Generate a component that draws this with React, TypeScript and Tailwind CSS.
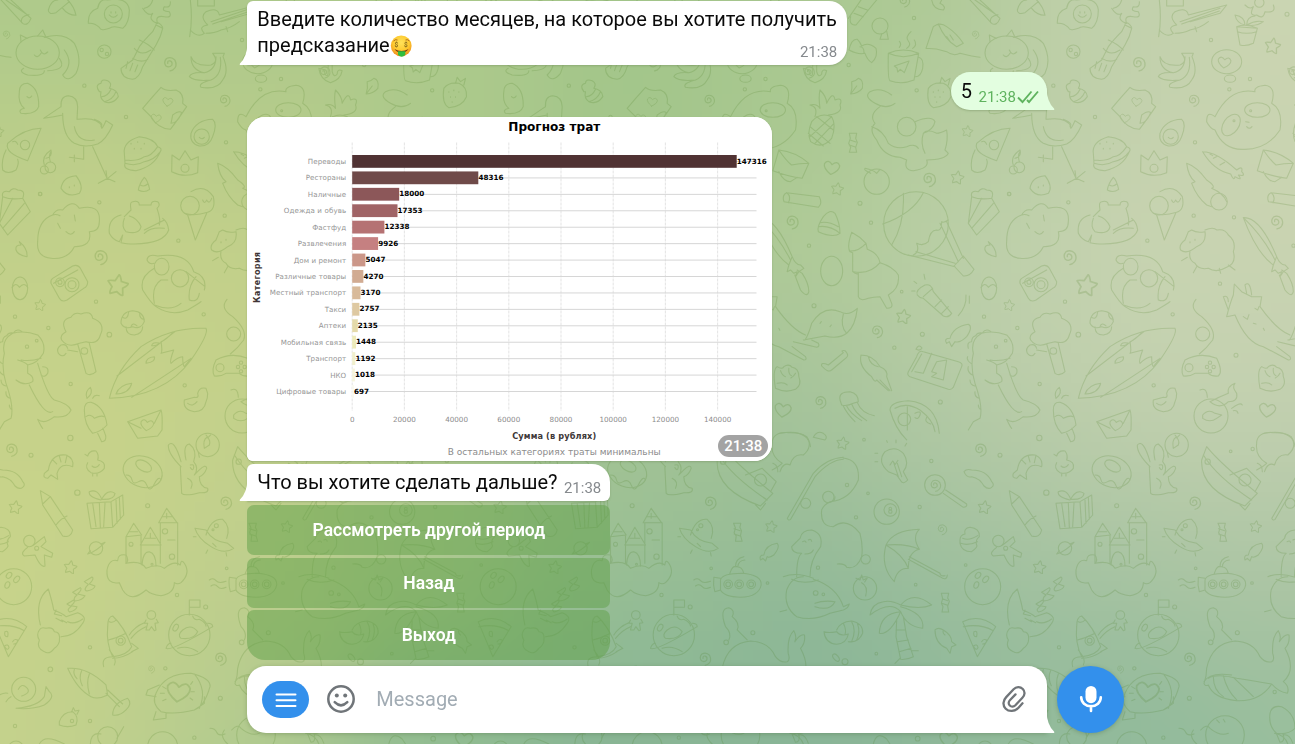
import React, { useLayoutEffect, useRef } from "react";

type Pt3 = [number, number, number];

const SAMPLES: [number, number, Pt3][] = [
  [0, 0, [174, 202, 139]],
  [0, 180, [189, 206, 138]],
  [0, 372, [198, 210, 138]],
  [0, 600, [200, 211, 138]],
  [0, 744, [197, 210, 140]],
  [120, 280, [196, 209, 138]],
  [120, 440, [199, 211, 138]],
  [120, 600, [199, 211, 139]],
  [120, 720, [192, 208, 141]],
  [240, 0, [170, 200, 140]],
  [240, 110, [184, 204, 138]],
  [240, 300, [195, 208, 138]],
  [240, 500, [194, 208, 140]],
  [240, 620, [188, 205, 142]],
  [240, 744, [172, 201, 144]],
  [450, 90, [172, 201, 139]],
  [430, 530, [174, 201, 143]],
  [430, 744, [143, 187, 145]],
  [640, 480, [164, 196, 148]],
  [640, 560, [154, 191, 148]],
  [650, 640, [143, 186, 149]],
  [650, 744, [132, 178, 148]],
  [650, 90, [162, 197, 138]],
  [800, 90, [169, 200, 144]],
  [870, 0, [170, 200, 145]],
  [800, 250, [175, 202, 150]],
  [790, 400, [166, 196, 154]],
  [800, 530, [153, 189, 153]],
  [800, 640, [138, 181, 150]],
  [860, 744, [135, 180, 151]],
  [950, 100, [184, 205, 162]],
  [950, 250, [187, 207, 168]],
  [950, 400, [182, 203, 166]],
  [950, 520, [166, 195, 160]],
  [950, 640, [148, 187, 155]],
  [1100, 60, [192, 208, 171]],
  [1080, 300, [196, 210, 175]],
  [1190, 200, [200, 211, 176]],
  [1190, 330, [200, 212, 178]],
  [1100, 430, [190, 206, 172]],
  [1100, 540, [172, 198, 164]],
  [1080, 650, [157, 191, 158]],
  [1100, 744, [139, 183, 153]],
  [1295, 30, [203, 213, 178]],
  [1295, 220, [202, 212, 178]],
  [1295, 400, [195, 208, 176]],
  [1295, 540, [180, 201, 168]],
  [1295, 640, [165, 194, 161]],
  [1295, 744, [147, 189, 155]],
];

function paintGradient(canvas: HTMLCanvasElement) {
  const ctx = canvas.getContext("2d");
  if (!ctx) return;
  const { width: w, height: h } = canvas;
  const image = ctx.createImageData(w, h);
  for (let y = 0; y < h; y++) {
    for (let x = 0; x < w; x++) {
      const px = ((x + 0.5) / w) * 1295;
      const py = ((y + 0.5) / h) * 744;
      let sum = 0;
      const c = [0, 0, 0];
      for (const [sx, sy, rgb] of SAMPLES) {
        const d = Math.exp(-((px - sx) ** 2 + (py - sy) ** 2) / (2 * 80 * 80));
        sum += d;
        rgb.forEach((v, i) => (c[i] += v * d));
      }
      const o = (y * w + x) * 4;
      image.data[o] = c[0] / sum;
      image.data[o + 1] = c[1] / sum;
      image.data[o + 2] = c[2] / sum;
      image.data[o + 3] = 255;
    }
  }
  ctx.putImageData(image, 0, 0);
}

const Stars = ({ at }: { at: Pt3[] }) => (
  <>
    {at.map(([x, y, r]) => (
      <path key={`${x}-${y}`} transform={`translate(${x} ${y}) scale(${r / 20}) rotate(8)`} d="M0-20Q3-19 6-8L19-6Q20-3 10 4L12 17Q9 19 0 12L-12 17Q-14 14-10 4L-19-6Q-18-8-6-8Z" />
    ))}
  </>
);
const Spirals = ({ at }: { at: Pt3[] }) => (
  <>
    {at.map(([x, y, r]) => (
      <path key={`${x}-${y}`} transform={`translate(${x} ${y}) scale(${r / 20})`} d="M-4 0Q-5-8 2-6Q9-3 6 5Q-1 12-9 6Q-15-3-7-12Q5-18 14-8Q22 8 8 17L2 19" />
    ))}
  </>
);
const Hearts = ({ at }: { at: Pt3[] }) => (
  <>
    {at.map(([x, y, r]) => (
      <path key={`${x}-${y}`} transform={`translate(${x} ${y}) scale(${r / 20}) rotate(8)`} d="M0 18Q-22 4-20-8Q-12-22 0-8Q12-22 20-8Q22 4 0 18Z" />
    ))}
  </>
);
const Rings = ({ at }: { at: Pt3[] }) => (
  <>
    {at.map(([x, y, r]) => (
      <circle key={`${x}-${y}-${r}`} cx={x} cy={y} r={r} />
    ))}
  </>
);

const TOP_PATHS = [
  "M205 55L250-10M228 75L290 0M212 50Q205 75 228 75M222 40L250 50M235 20L262 30",
  "M305 102l-5 16h25l-5-25",
  "M325 160Q323 240 330 242Q365 255 402 240L416 160Q370 140 325 160ZM325 160Q370 180 416 160M416 172Q432 175 428 205Q422 232 404 230M358 142q8-10 0-18M380 145q15-10 5-22t8-28M398 145q15-10 5-25M343 198l44-15-14 35-12-10-8 8-2-12z",
  "M207 150Q215 115 232 118Q240 125 245 138Q265 125 288 145Q295 170 275 188Q262 180 255 160Q235 165 207 150M240 140q12 0 12 18",
  "M438 145L460 80Q480 65 500 80Q530 100 550 130L530 140Q495 120 475 72M438 145Q470 145 500 155Q520 170 540 160Q580 170 600 172M500 110l10 15M510 105l10 15",
  "M570 0L635 70Q650 80 660 55L600 0M585 0L650 45M632 68q-5-20 22-24",
  "M712 30Q720 0 740 0M712 30Q712 45 735 38L775 5M755 25Q770 45 795 46Q790 20 770 0",
  "M832 70Q830 35 860 25Q865-5 890 0Q950-10 955 30Q955 70 935 85Q905 75 895 85Q870 95 865 82Q850 68 832 70ZM895 45q12 14 24 0M900 35v4M914 35v4",
  "M630 125L628 105L648 115M680 108L695 90L705 112M700 112Q760 95 790 130Q815 180 795 220Q770 250 755 225Q790 190 760 150M745 175Q770 210 710 212M670 165q10 12 20-5M688 150q8 20 22 6M638 205Q620 215 650 225Q700 230 700 212",
  "M1035 75L1025 95Q1000 120 985 140Q970 170 965 180L930 205Q930 235 965 238Q985 235 995 200L1035 135Q1050 110 1055 85ZM985 120Q1010 130 1030 150M965 175Q990 190 1010 178M970 145q20 25 50 5M1035 72q8-10 20 10M950 185l-5 20M965 190l-8 22M980 195l-8 20",
  "M995 25Q1010 50 1025 40Q1010 60 1040 70Q1030 45 1060 50Q1085 55 1075 35Q1050 35 1060 20Q1080 25 1078 5M1000 25Q1020 20 1025 0",
  "M1138 0Q1145 60 1136 110M1138 90Q1160 115 1180 100Q1160 80 1190 75Q1165 50 1185 35Q1220 20 1225 45L1340 15L1320 40L1230 65M1200 65L1320 25M1205 72L1318 33M1185 100Q1210 100 1230 90Q1260 85 1285 65M1160 0v18h50v-18M1245 80l5 15",
  "M1140 170Q1150 200 1200 195Q1225 185 1205 160L1240 160L1236 170Q1255 215 1235 240Q1220 270 1170 262Q1160 250 1200 240Q1150 245 1135 230Q1140 215 1180 218Q1140 210 1140 170M1180 218Q1215 210 1215 170M1200 240Q1235 225 1228 172",
  "M1370 80L1380 135Q1400 140 1420 130L1432 85ZM1370 80Q1400 70 1432 85M1372 95Q1400 105 1430 95M1400 75Q1400 50 1425 48M1365 45Q1395 50 1395 75M1365 45Q1370 70 1395 75M1400 75Q1430 80 1450 65Q1425 60 1400 75M1395 15Q1410 30 1420 20Q1405 50 1430 45Q1450 60 1455 35Q1490 40 1480 15",
  "M1305 350Q1280 330 1280 365Q1290 385 1305 390Q1330 450 1390 448Q1460 450 1500 390Q1510 330 1475 310Q1490 260 1455 256Q1420 260 1425 275Q1350 260 1305 350M1397 365l10 2M1400 380q8 10 16 0",
  "M865 275Q850 255 870 250Q870 235 890 242Q905 250 895 265Q920 270 922 290Q905 315 880 305Q865 295 870 275ZM880 305Q905 300 915 275M872 290Q890 290 900 268",
  "M1050 262Q1065 275 1095 270Q1120 280 1115 310L1127 320Q1100 360 1078 388Q1040 385 1020 350L995 325Q1020 295 1050 262ZM1085 345Q1105 330 1112 338Q1100 370 1080 370Z",
  "M1205 358Q1220 370 1205 410Q1195 440 1165 438Q1135 430 1140 400Q1155 360 1205 358ZM1165 412q8 8 15 0",
  "M750 320Q748 288 772 287Q800 290 800 320L798 358M750 320L698 355Q730 350 755 345M755 340Q755 410 790 430Q820 445 860 432Q885 420 905 375L885 362Q870 395 872 380Q860 350 800 358M790 380Q800 430 850 420M850 358Q880 370 870 380M818 440V478L775 472M790 465l0 20M845 440L888 535M862 550L890 535L915 515M888 535L885 512M888 535L912 545",
  "M940 460Q935 425 985 410Q1030 415 1040 440Q1055 445 1048 455Q1030 500 975 512Q935 510 942 490ZM942 480Q980 485 1000 470Q1020 470 1040 440M942 490Q975 500 1000 485Q1030 480 1048 455M960 430v2M980 425v2M1000 430v2M970 445v2M990 445v2",
  "M1083 465L1082 515Q1120 535 1160 518L1162 470L1140 480L1122 452L1105 480Z",
  "M1268 455Q1310 455 1370 510M1268 455Q1300 510 1352 522M1370 510Q1390 495 1385 515Q1400 530 1375 525Q1390 545 1365 530Q1362 545 1352 522M1300 475l12-6M1320 495l14-8M1290 462l8 5",
  "M1450 450Q1500 455 1540 490L1520 535Q1480 530 1432 512ZM1450 450Q1470 480 1488 495Q1510 490 1540 490M1450 515Q1465 545 1485 545L1505 532",
  "M625 275Q625 250 650 250Q685 265 683 320Q675 345 630 340Q620 330 640 325Q620 310 625 275M648 290q8 8 14-2",
  "M95 365Q120 335 155 350Q170 375 155 415Q125 450 92 425Q80 400 95 365ZM90 380L150 430M85 400L130 438M110 350L160 390M155 350L90 410M162 370L105 430M105 350Q115 320 90 315Q110 310 120 325Q115 290 120 270Q140 290 140 310Q160 270 165 300Q190 290 180 315Q190 340 145 345",
  "M212 282Q235 280 247 265Q252 240 235 235Q225 245 215 245Q218 265 212 282L230 258",
  "M208 400h22l-3 15l5 12l-5 15l3 15h-22l4-15l-6-12l5-15zM210 420l18 6M208 435l18 6",
  "M345 310Q320 330 285 310Q250 290 270 275Q300 260 335 285M300 320Q265 345 285 370Q265 390 290 420Q310 470 360 472L380 480Q370 510 400 512Q450 505 440 480Q495 480 505 460L495 450Q505 420 500 390Q480 400 470 400Q440 385 430 400Q420 430 435 460M405 365Q455 345 465 365Q460 390 430 400M275 380Q310 390 325 430Q350 450 380 440Q405 430 415 445",
  "M690 385Q640 385 590 430Q580 460 650 482ZM585 450Q570 480 575 510Q590 525 615 510Q625 490 620 478M605 425q10-5 15 8",
  "M700 495Q690 470 720 450Q725 470 705 475M718 485Q712 465 720 455",
  "M272 520Q250 510 255 505Q280 510 290 520L300 508",
  "M750 565Q755 530 795 527Q820 560 805 580Q770 595 750 565M775 560v3M790 555v3",
  "M445 265Q460 245 490 250Q515 260 513 290Q500 320 460 323Q438 310 445 265M480 250L485 232L495 245L510 235L505 255M460 275v2M475 270v2M490 275v2M465 290v2M480 290v2M470 305v2",
  "M1000 532Q985 550 982 570Q1000 580 1016 568Q1010 540 1000 532ZM988 555Q1000 562 1010 552",
  "M1220 490Q1250 500 1280 540Q1310 560 1295 565Q1330 580 1340 605M1220 490Q1225 530 1245 545L1235 550Q1250 590 1280 615L1295 620",
  "M70 205Q75 240 105 248Q135 240 140 212Q125 205 125 222Q115 235 110 215V190M70 205Q90 205 88 222Q98 235 98 215V190",
  "M455 0Q460 30 490 30Q500 20 480 10L485 0",
];

const MID_PATHS = [
  "M20 38Q5 45 12 65L115 82Q128 70 118 50ZM20 38Q35 50 25 68",
  "M130 110Q150 85 165 100Q180 130 180 160Q160 175 115 155Q110 140 130 110ZM115 140Q150 135 180 160M120 128q25-5 55 12",
  "M370 40Q375 130 335 195M430 38Q400 100 308 132M500 125L550 235M480 130L535 245M385 225L525 260M408 215L525 250M550 228L582 268Q570 290 550 288L522 258ZM505 120Q490 130 485 125Q485 155 470 150Q450 150 445 185Q430 200 410 190Q420 215 400 225",
  "M215 157Q200 200 210 215L218 218V275Q230 285 235 280V350Q240 365 265 355Q280 350 300 350L320 385Q340 385 335 370L325 345Q360 325 355 285Q340 260 300 248Q295 220 262 208L258 190Q240 170 215 157ZM208 213Q235 215 258 190M220 275Q270 285 300 248",
  "M1390 113Q1440 110 1490 230L1480 255Q1430 220 1390 113ZM1390 113Q1450 170 1485 240M1480 255L1475 275L1485 270L1495 280L1505 275L1500 290L1510 275L1525 265L1515 255Q1500 255 1490 230M1498 285L1515 330Q1535 355 1540 335Q1540 310 1520 280L1505 270",
  "M575 50Q570 30 595 35Q605 20 620 30Q645 30 635 55L658 95L590 165L565 130ZM565 130L605 55M575 145L640 70M575 50Q600 60 635 55",
  "M680 185Q680 120 725 105Q735 85 755 90Q785 55 805 85Q870 70 865 125Q865 155 835 155Q845 200 790 200Q770 240 720 235Q675 230 680 185ZM765 155q15 15 25 0M740 130l8 15M790 105l3 18M725 105q10-4 22 2",
  "M625 185Q650 205 648 230Q620 225 615 210Q612 195 630 195Z",
  "M960 90Q955 65 965 65Q985 60 985 75L1020 75Q1020 60 1040 65Q1050 75 1038 85Q1050 120 1045 135M960 90L940 110M930 105Q890 115 895 160Q905 180 925 185L935 165L930 188Q945 192 970 192Q1060 190 1073 150Q1070 125 1055 115M940 115Q930 140 945 155Q985 165 990 140Q980 115 955 108M1000 160Q1020 140 1060 145M1000 150L1060 120",
  "M1140 35Q1180 10 1207 50Q1215 90 1190 97Q1150 110 1120 100M1130 105L1153 180L1187 100M1175 60q5 15 12 0q8 15 15-5",
  "M1225 155L1235 150Q1250 160 1275 155Q1280 190 1250 200Q1220 225 1202 210Q1195 195 1215 180ZM1275 150Q1300 140 1310 150Q1335 145 1345 165Q1370 185 1360 215Q1370 250 1340 262Q1310 280 1285 265Q1255 270 1245 250Q1225 240 1230 215M1222 232L1205 242M1250 260L1240 278M1318 265L1322 280M1345 255L1365 270M1230 185v3M1245 178v3",
  "M725 295L785 258Q800 252 808 265L830 305Q830 320 818 325L768 360Q752 368 745 355L720 310Q718 300 725 295ZM728 310L800 270",
  "M603 322Q615 305 625 322Q640 305 650 322",
  "M1040 228Q1010 220 1008 240Q1015 255 1030 250M1040 228Q1130 215 1148 275Q1190 290 1180 330M1030 265Q985 290 995 330Q1020 370 1035 380Q1080 410 1130 390Q1165 370 1170 365M1030 370Q1020 320 1050 300L1070 300M1155 290Q1130 320 1135 360Q1160 370 1165 340M1125 275L1182 320M1030 375Q1080 395 1110 370",
  "M412 345Q405 330 435 315Q455 310 460 335L515 400Q505 415 490 408L430 355Q420 355 412 345ZM430 350L458 325M465 380L485 360M485 400L505 380M435 298l-3-15M410 310l-8-6M405 333h-10",
  "M535 407Q560 380 558 345M568 348v22",
  "M500 490Q490 475 510 475Q520 440 565 433Q580 440 560 470Q540 490 525 485L515 500L508 485Z",
  "M1340 410Q1350 370 1360 345L1363 312L1385 335L1415 350L1445 350L1440 380Q1490 450 1530 465M1340 410L1365 405Q1400 490 1450 500L1525 540Q1535 540 1530 530L1490 500M1330 350L1345 390M1330 350Q1345 345 1345 365M1395 315L1400 340M1395 315Q1410 300 1415 345M1390 410l12 8l5-14M1425 385l8 5l4-10M1420 430l8 2M1450 445l3 6",
  "M70 480L135 468Q220 490 232 385Q205 410 180 395Q130 375 95 430Q85 465 75 480M40 485L110 502Q120 500 115 490L95 480M190 402Q180 440 200 460M120 430l4-5M150 440l4-5",
  "M145 555L190 518Q180 510 195 512Q208 525 200 532L155 570Q145 580 125 558Q122 545 145 555",
  "M243 525Q280 525 300 560Q325 570 320 590L335 632M243 525Q235 560 275 590Q285 610 290 600L325 632M300 600L330 632M265 530Q270 555 295 560",
  "M430 515L535 545Q550 550 545 560L520 622Q515 630 505 628L390 590Q380 585 385 575L410 530Q415 510 430 515ZM455 520L430 580L405 575M425 522L395 575M470 545L500 540L490 600L455 590L470 580L455 575ZM408 508q8-18 18-4q-5 10-18 4",
  "M605 460Q640 450 680 465Q705 490 697 520Q680 550 650 555Q640 545 620 540M605 460Q570 480 580 520Q570 560 585 610Q610 680 600 715L580 725L565 750M650 555V580Q670 590 665 605Q640 620 615 600M680 550Q710 650 730 660Q770 670 780 690Q770 715 730 710Q700 735 680 718Q690 740 695 745M725 695Q700 710 655 615M695 560Q715 560 710 580Q700 595 690 585M630 540Q660 545 690 535M565 505q-5-20 10-20q0-15 12-18q5-10 20-8q10-15 25-5M563 530q-5 10 10 20M565 560q-5 15 12 25M570 600q0 15 15 18M585 635q-2 15 12 20M595 675q0 10 8 14",
  "M805 490Q770 505 752 480Q745 465 765 455Q745 420 780 412Q790 395 810 402Q840 390 845 415Q885 430 868 465Q860 495 825 485ZM800 492L825 580Q840 590 855 575L835 490M800 515L770 510M770 505Q765 490 750 495Q735 505 742 520Q755 535 765 520",
  "M930 430Q930 395 965 392Q1000 395 1000 425Q990 450 965 440Q940 450 930 430ZM945 440Q945 465 970 465Q995 460 995 440M935 412q15 10 18-16M1000 418q-15 0-14-20M960 440q5-15 18-2",
  "M895 655Q915 570 990 500Q1080 440 1185 445Q1195 460 1140 540Q1060 650 895 655ZM918 588L1092 455M962 652L1140 535M1085 458Q1065 480 1050 485Q1055 515 1050 520L1088 510Q1075 545 1080 550Q1100 530 1115 530Q1115 555 1120 560L1140 535",
  "M915 642Q925 615 962 610Q955 640 915 642ZM1005 550q0-18 25-20q5 15-25 20M1022 497q2-12 22-8q-5 10-22 8",
  "M1248 358Q1225 385 1265 410Q1310 450 1298 480Q1280 505 1258 522M1215 540Q1260 515 1310 535Q1330 575 1315 588Q1295 590 1285 580H1245Q1230 590 1210 588Q1200 570 1215 540Z",
  "M1440 625Q1430 570 1445 560Q1460 570 1465 560Q1480 550 1490 562Q1510 565 1510 590Q1520 615 1500 628Q1470 640 1440 625ZM1455 572q5 15 15 18M1480 565q-2 18 8 22M1500 580q-5 10-14 14M1445 610q20-5 30 5",
  "M180 660Q175 635 210 635Q235 640 235 665L220 670Q200 680 185 675ZM190 678Q200 700 225 725M200 678Q210 700 245 722M215 672Q225 700 260 722M232 668Q245 700 283 707",
  "M330 690Q330 665 385 662Q470 670 478 760M330 690Q345 745 380 780M345 685Q380 665 420 690Q460 720 465 755M382 680V750M405 700q20-10 15 5t-15 8M440 712q-8 15 12 20",
  "M820 690Q820 665 840 667Q880 680 888 735Q870 755 845 760Q820 735 820 690ZM828 655Q820 635 838 622Q848 640 828 655M845 655q5-12 20-8M825 710Q840 700 850 715Q870 705 880 710M860 760l12 25q15 0 12-18l-8-22",
  "M950 725L1050 690Q1055 700 1053 750L1040 768L980 775ZM950 725L990 745M1050 690L1030 730",
  "M1160 640Q1165 620 1185 625L1190 640Q1190 655 1185 665Q1180 695 1150 695Q1115 690 1120 660L1150 652Q1165 655 1160 640M1130 670q15 12 28-5",
  "M1290 665Q1320 690 1345 665Q1375 665 1370 640Q1355 620 1365 610Q1340 620 1345 640Q1320 650 1290 665M1260 630q20-10 22 22M1355 685q25-20 32-10M1360 692q12-2 14 8M1268 705Q1285 685 1305 700L1325 705L1310 715Q1290 730 1268 715Z",
];

const LOW_PATHS = [
  "M0 125Q10 95 30 105Q40 70 70 75Q100 50 80 20Q50 0 0 10M100 22Q110 0 130 10Q145 20 135 30Z",
  "M325 125Q290 95 315 65Q345 45 370 70Q390 100 370 125L383 150Q370 165 362 152L350 135ZM340 95L355 140M352 100L365 140M330 105l8-12l8 10l8-12M320 32l2 5M348 30v8M380 40l-5 8M285 70h8M285 95h8",
  "M22 265L100 130Q140 85 190 82M32 268L105 140Q150 90 190 88M22 265q3 8 10 3M190 84Q240 90 235 150Q210 210 150 215M125 240Q120 290 160 290Q200 260 240 310Q250 350 245 380Q230 420 200 412Q195 400 172 402M165 200Q165 215 150 215Q130 225 125 240",
  "M490 190L550 232Q562 232 560 222L497 180",
  "M552 125Q560 115 575 120Q620 120 635 155Q645 165 635 172Q625 180 612 168Q600 145 575 140Q560 145 552 125",
  "M700 130Q695 145 710 145L720 135L740 148L738 130Q750 95 785 110Q790 85 765 75Q720 70 712 120ZM725 90l12 12M745 78l5 18M768 76l-5 22",
  "M830 78Q835 60 855 63Q865 75 860 90Q885 95 880 115Q865 135 840 128Q820 115 830 98M830 78l-8-5M843 108q12 10 22-4M845 130v8M858 130v8",
  "M688 182L718 200L785 300Q780 325 755 318L695 225ZM695 222L718 200M735 285Q750 265 768 258",
  "M828 220L900 215L935 195L938 255L905 292L840 296ZM845 220L855 290M865 218L868 292M882 218L878 290M900 215L905 292M915 210L918 280M925 202L928 268M870 210Q830 200 835 185Q860 175 872 208Q890 175 912 190Q910 210 872 208",
  "M1110 110Q1070 70 1072 45Q1090 25 1110 95M1125 90Q1115 45 1135 42Q1160 60 1148 95Q1165 115 1150 135L1165 120Q1185 100 1187 115Q1180 135 1165 140Q1165 170 1190 175Q1195 190 1165 188Q1120 200 1112 190Q1110 150 1108 110M1130 145Q1150 155 1140 175M1138 105q12-4 10 8t-10 0M1165 82l-3-15M1180 55Q1175 30 1188 22Q1200 30 1195 45ZM1185 15l6 8l8-8",
  "M1280 50Q1320 100 1432 190L1395 228Q1260 180 1265 90ZM1270 75Q1310 140 1415 210M1350 135L1400 115L1442 155L1425 185M1380 225l15 15l15-20M1430 120Q1450 110 1460 100Q1425 80 1430 40Q1430 5 1480 8Q1540 5 1545 50M1432 100q15 5 15 25",
  "M945 400V320M990 400V315M945 320L968 280L992 315ZM988 345L1018 292L1050 345ZM1048 400V280M1100 405V278M1043 278L1067 235L1098 278ZM993 405Q995 365 1015 365Q1035 370 1035 408M955 305h25M1003 325h30M1055 260h30M1018 310v15M1067 250v15M1070 330h22",
  "M925 458Q885 465 888 420Q895 385 920 392Q920 370 945 375Q955 390 945 400Q990 390 1005 415Q1040 400 1060 415Q1090 390 1108 405Q1110 385 1120 400Q1140 430 1110 458Q1100 465 1090 458Q1090 490 1050 497Q1020 495 1005 480Q960 520 935 480Z",
  "M1185 315Q1200 265 1235 268Q1260 290 1247 325M1152 295L1185 300Q1205 335 1250 340L1268 355Q1240 375 1200 350Q1160 325 1152 295ZM1190 360l-5 10M1245 368l2 10M1155 320h-8M1205 340l10 10",
  "M484 490h22l-3 14l5 10l-5 14l3 18h-20l3-16l-5-10l4-14zM487 506l16 6M485 520l18 6",
  "M1314 280h22l-3 12l5 10l-3 14l5 18h-20l2-16l-6-10l4-14zM1316 296l18 6M1316 312l18 6",
  "M1395 390Q1390 375 1405 375Q1410 345 1445 340Q1455 350 1435 375Q1420 385 1415 380L1410 393L1402 385Z",
  "M465 600Q475 590 490 600Q515 615 515 635L528 645L515 650L510 670L500 655Q465 640 465 600ZM490 600q-3 10 5 15",
  "M1275 450Q1280 430 1340 430Q1400 435 1397 465Q1390 500 1335 502Q1285 500 1275 480ZM1275 445L1255 442Q1252 465 1258 485L1275 480M1303 430Q1310 405 1325 410Q1340 410 1345 430M1320 410Q1320 385 1345 380M1327 410Q1328 392 1348 390M1195 450q12-8 20 2t30 2M1200 468q12-8 20 2t25 2",
  "M70 440Q35 440 20 480Q10 530 50 560Q100 575 150 550L190 540Q205 535 208 522L190 530Q170 470 100 448M50 440Q50 380 65 370Q35 370 35 350Q50 335 60 325Q65 300 95 300Q130 310 122 350Q90 390 90 440M10 440Q50 425 100 445M105 520Q130 510 165 515Q150 545 105 530M35 448Q70 465 115 450M0 545L20 540M68 335q8-5 10 2M85 330q8-5 10 4M75 372q20 0 25-12",
  "M228 445l12 5l5-15l5 15l12-6l-8 12M245 458q20 10 12 40",
  "M318 345Q340 300 418 298Q395 320 418 358Q385 365 385 415Q350 415 343 455Q300 410 318 345ZM318 345Q380 340 418 358M318 345Q370 375 385 415M388 380L480 430Q480 440 495 437M385 388L480 440Q500 455 502 435",
  "M540 330Q540 315 555 312Q550 295 570 292Q600 295 598 320Q585 330 590 345Q595 350 575 365Q545 365 540 340ZM542 340Q565 348 592 335M548 325q20 8 45-8",
  "M668 345L700 320L705 335L690 350L725 370L722 382L700 375L702 408Q690 415 672 375L640 378Q625 370 650 352",
  "M830 372Q855 365 882 337L870 342M838 362L830 372",
  "M712 477Q670 510 688 585M712 477Q725 520 728 540Q755 550 765 560L800 548Q830 560 815 580Q790 620 750 620M735 540l-5 12l22 5M735 565L755 575M770 575q20 10 45-8M752 570l15 8",
  "M685 600Q690 590 705 595Q725 590 730 605Q750 605 745 635Q740 650 730 655Q715 675 700 665Q675 655 685 630Q675 615 685 600Z",
  "M820 455L843 441Q852 445 835 462L852 468Q850 478 828 483Q815 480 832 463ZM785 487L808 473Q815 478 800 492L822 497Q815 510 792 513Q785 505 798 495ZM768 522L788 510Q795 515 780 527L798 530Q795 542 776 546Q765 540 780 530Z",
  "M362 545Q330 510 270 555Q275 520 310 515Q335 510 362 525Q400 480 455 525Q420 540 362 525M362 545Q300 550 298 610Q330 615 362 545M362 545Q380 590 428 595Q435 550 362 530M350 570L348 620L362 688Q380 690 400 680L380 620L370 560M348 600L375 600M352 635L385 630M358 665L393 655M345 700L360 685M395 662H415",
  "M132 605Q135 640 170 643Q200 640 205 612Q180 620 170 605Q145 610 132 605M170 600Q180 575 215 573Q250 580 248 610Q235 640 205 635M190 580Q200 600 195 615M215 575Q230 600 215 635M232 580q10 25-2 50",
  "M548 575Q600 550 647 590L592 680ZM550 590Q600 580 640 602M582 605q12-5 8 15q-12 0-8-15M605 635q5-10 15-5q0 12-12 12M580 648q12-8 14 5q-5 12-14-5",
  "M890 590Q890 560 905 558Q940 590 962 650Q950 675 905 680Q885 640 890 590ZM892 630Q915 625 945 610M962 640L982 655L962 665M905 685Q935 685 965 665M905 680Q870 680 878 710M895 660Q920 690 910 705M895 575q12 5 20-5M955 615Q970 590 1000 578M960 625Q980 600 1005 590",
  "M1005 570L1000 580H1010L1005 600H1015L1021 590L1030 602L1035 600L1032 580L1042 578L1036 568",
  "M1115 600Q1140 580 1160 605Q1150 630 1110 625Q1098 615 1115 600ZM1135 555V510H1167V532H1135M1065 655Q1080 665 1205 590M1065 655Q1070 640 1080 640M1190 580Q1205 580 1205 590M1145 558q5 15 20 10q20 10 20 20M1100 655q30-10 60 10",
  "M1272 760Q1280 740 1280 715Q1295 640 1365 633Q1420 635 1440 680Q1455 700 1475 695Q1485 690 1478 670Q1475 620 1495 602Q1505 620 1498 635Q1515 610 1527 615Q1530 640 1515 655Q1550 720 1510 755Q1530 770 1522 790Q1495 785 1475 762Q1440 815 1370 812Q1300 805 1285 765Q1275 770 1272 760ZM1272 755Q1290 725 1355 735M1285 745Q1310 730 1370 745Q1430 755 1475 762M1300 740Q1300 780 1330 800M1330 737Q1340 780 1370 810M1360 742Q1390 770 1420 800",
  "M1300 630Q1310 610 1290 590Q1270 535 1300 533Q1320 540 1310 560Q1335 580 1325 600Q1340 615 1355 630",
  "M1035 790Q1060 730 1140 730Q1200 745 1197 770Q1180 830 1150 840Q1090 855 1050 845Q1020 820 1035 790ZM1150 732Q1190 780 1165 835M1045 765L1010 780L1005 795L1035 800M1035 845L1027 870L1065 865V848M1150 840L1180 820V800M1055 770l10 6M1048 790h12M1055 812l10-4M1145 755l-6 8M1150 785h-10M1145 810l-8-6",
  "M1470 850Q1475 825 1505 830Q1545 850 1545 895Q1525 915 1490 910Q1465 890 1470 850ZM1490 912l10 25q15 0 10-25",
  "M1197 895q15 0 20 12t25 5M1240 900Q1225 920 1250 942M1262 900Q1280 880 1290 895Q1320 920 1345 910M1310 870l8 8M1330 868l5 8",
  "M615 835Q680 830 700 800L705 770L715 785Q735 800 700 825Q660 840 615 835ZM565 795q15-8 25-5M600 800q-10 5-15 15M622 778q10-20 25-5t-15 25",
  "M770 715Q830 710 885 765L890 795Q860 810 840 800Q800 780 770 715ZM885 790L925 830M890 780L935 822M905 855Q905 820 950 805Q965 820 945 840Q925 860 905 855M790 718q-5 15 8 28M812 722q-10 20 2 45M835 732q-10 25 0 60",
  "M745 875Q755 845 785 845Q805 860 795 885Q770 895 745 885ZM782 845l5-12l5 10l12-2l-6 12",
  "M685 942Q700 910 760 942M838 942Q840 905 870 912M918 925l20-35M280 942q10-40 40-15l10 15M30 910q30 5 40 32M55 915q20-5 30 25",
];

function Doodles() {
  return (
    <g id="doodles" fill="none" stroke="#477a1e" strokeWidth={3.2} strokeLinecap="round" strokeLinejoin="round">
      <g>
        {TOP_PATHS.map((d) => <path key={d} d={d} />)}
        <Stars at={[[562, 394, 17], [532, 533, 20], [172, 567, 19], [1478, 138, 24]]} />
        <Spirals at={[[372, 2, 20], [585, 103, 14], [1075, 190, 24], [1240, 300, 20], [446, 537, 24], [1540, 215, 20]]} />
        <Hearts at={[[1070, 305, 15], [1035, 355, 15], [155, 503, 23], [1333, 187, 19]]} />
        <Rings at={[[300, 78, 24], [402, 54, 5], [206, 195, 5], [410, 271, 5], [820, 257, 5], [945, 351, 5], [1245, 427, 5], [1293, 120, 5], [1410, 237, 5], [1348, 268, 5], [1521, 43, 6], [688, 582, 5], [907, 42, 27], [880, 155, 20], [872, 150, 5], [888, 162, 5], [1438, 8, 14], [1362, 362, 3], [1412, 332, 3], [1172, 410, 23], [1122, 505, 12], [1317, 605, 25], [380, 380, 28], [642, 435, 14], [700, 510, 12], [718, 502, 16], [290, 545, 38]]} />
        <ellipse cx="680" cy="158" rx="65" ry="50" />
        <ellipse cx="1340" cy="185" rx="45" ry="36" />
        <ellipse cx="1350" cy="236" rx="17" ry="11" />
        <ellipse cx="1353" cy="375" rx="23" ry="36" transform="rotate(35 1353 375)" />
        <ellipse cx="1432" cy="330" rx="38" ry="22" />
      </g>
      <g transform="translate(0 540)">
        {MID_PATHS.map((d) => <path key={d} d={d} />)}
        <Stars at={[[920, 316, 32], [687, 376, 17], [370, 410, 22]]} />
        <Spirals at={[[35, 125, 23], [867, 230, 25], [290, 453, 21], [120, 665, 21]]} />
        <Hearts at={[[1462, 690, 24], [1008, 735, 19]]} />
        <Rings at={[[240, 70, 6], [273, 128, 5], [87, 197, 5], [102, 377, 6], [687, 42, 5], [865, 67, 5], [1102, 182, 5], [1241, 107, 5], [1362, 112, 5], [343, 503, 5], [427, 463, 6], [612, 410, 5], [712, 444, 5], [855, 365, 5], [895, 464, 7], [779, 612, 5], [1121, 616, 5], [1368, 526, 6], [1320, 311, 5], [1178, 403, 5], [481, 666, 6], [365, 335, 4], [408, 132, 97], [1137, 77, 28], [783, 314, 21], [783, 314, 12], [747, 307, 13], [747, 307, 6], [1107, 295, 26], [820, 513, 10], [1268, 462, 21], [1227, 563, 12], [1281, 561, 5], [1301, 561, 5], [1290, 548, 5], [1290, 574, 5], [1293, 708, 51], [373, 718, 19], [648, 500, 5], [677, 482, 4]]} />
        <ellipse cx="155" cy="273" rx="33" ry="44" />
        <ellipse cx="627" cy="325" rx="23" ry="34" />
        <ellipse cx="1052" cy="260" rx="22" ry="25" />
      </g>
      <g transform="translate(0 1290)">
        {LOW_PATHS.map((d) => <path key={d} d={d} />)}
        <Stars at={[[188, 40, 19], [613, 232, 20], [778, 412, 20], [1427, 290, 18]]} />
        <Spirals at={[[600, 58, 22], [485, 297, 18], [465, 165, 20], [1243, 217, 22], [1227, 685, 22], [1020, 717, 13]]} />
        <Hearts at={[[1102, 785, 34], [505, 928, 26]]} />
        <Rings at={[[252, 29, 4], [778, 24, 8], [660, 76, 6], [454, 93, 5], [264, 190, 4], [419, 231, 5], [228, 262, 5], [201, 165, 5], [799, 188, 8], [1010, 227, 6], [1352, 64, 4], [1418, 57, 5], [114, 413, 5], [407, 464, 4], [557, 405, 4], [1247, 415, 4], [1416, 459, 4], [1098, 495, 5], [1184, 531, 6], [1372, 608, 6], [1292, 637, 7], [289, 671, 4], [195, 695, 9], [837, 652, 5], [1063, 715, 5], [1228, 805, 6], [837, 873, 5], [1150, 923, 5], [1484, 786, 5], [413, 926, 7], [145, 201, 17], [77, 220, 15], [257, 388, 14], [320, 245, 38], [331, 240, 19], [331, 236, 4], [331, 245, 5], [465, 165, 31], [1190, 45, 35], [1395, 150, 18], [1283, 95, 8], [960, 343, 6], [1062, 304, 8], [1083, 380, 8], [1023, 403, 3], [1216, 287, 6], [1206, 299, 3], [1298, 463, 13], [1331, 463, 13], [1367, 463, 13], [1298, 463, 7], [1331, 463, 7], [1367, 463, 7], [107, 489, 7], [130, 493, 4], [255, 475, 35], [655, 333, 17], [677, 355, 6], [608, 470, 54], [855, 355, 20], [929, 632, 14], [929, 632, 7], [1021, 555, 13], [1135, 615, 62], [1335, 915, 58], [638, 778, 36], [890, 920, 30], [1055, 950, 45], [615, 955, 22], [718, 718, 7], [612, 888, 5], [783, 873, 5]]} />
        <ellipse cx="995" cy="125" rx="60" ry="46" transform="rotate(20 995 125)" />
        <ellipse cx="998" cy="108" rx="26" ry="15" transform="rotate(30 998 108)" />
        <ellipse cx="594" cy="436" rx="7" ry="10" transform="rotate(40 594 436)" />
        <ellipse cx="617" cy="448" rx="7" ry="11" transform="rotate(40 617 448)" />
        <ellipse cx="589" cy="465" rx="7" ry="10" transform="rotate(20 589 465)" />
        <ellipse cx="1094" cy="593" rx="7" ry="11" transform="rotate(30 1094 593)" />
        <ellipse cx="168" cy="683" rx="7" ry="13" transform="rotate(-40 168 683)" />
        <path d="M945 135q15 0 18 15t20 5t25 12t22-5t20-12" />
      </g>
    </g>
  );
}

function Wallpaper() {
  const ref = useRef<HTMLCanvasElement>(null);
  useLayoutEffect(() => {
    if (ref.current) paintGradient(ref.current);
  }, []);
  return (
    <div className="absolute inset-0">
      <canvas ref={ref} width={130} height={75} className="absolute inset-0 h-full w-full" />
      <svg width="1295" height="744" className="absolute inset-0 opacity-[0.18]">
        <g transform="translate(780 0) scale(0.33333)">
          <Doodles />
          <use href="#doodles" x="-1453.5" />
          <use href="#doodles" x="-2907" />
          <use href="#doodles" x="1453.5" />
        </g>
      </svg>
    </div>
  );
}

const TailLeft = () => (
  <svg className="absolute -left-[8px] bottom-0" width="10" height="22" viewBox="0 0 10 22">
    <path d="M10 0H8.500Q8 14 1 20.500Q0 22 2 22H10Z" fill="#fff" />
  </svg>
);
const TailRight = ({ className }: { className: string }) => (
  <svg className={`absolute -right-[8px] bottom-0 ${className}`} width="10" height="22" viewBox="0 0 10 22">
    <path d="M0 0H1.500Q2 14 9 20.500Q10 22 8 22H0Z" fill="currentColor" />
  </svg>
);

const MoneyFace = () => (
  <svg className="inline-block align-middle" width="23" height="23" viewBox="0 0 23 23">
    <defs>
      <radialGradient id="face" cx=".5" cy=".35" r=".65">
        <stop offset="0" stopColor="#ffe25a" />
        <stop offset=".6" stopColor="#fdc92f" />
        <stop offset="1" stopColor="#f08c1a" />
      </radialGradient>
    </defs>
    <circle cx="11.200" cy="10.800" r="10.400" fill="url(#face)" />
    <path d="M3.500 6q2-2 4-1M15.500 5q2-1 4 1" fill="none" stroke="#a8641c" strokeWidth=".9" />
    <path d="M4.500 14Q11.500 17.800 18.500 14Q16.500 17.500 11.500 17.500Q6.500 17.500 4.500 14Z" fill="#7a3b12" />
    <path d="M8 16.300h7.300v3.500q-3.600 4-7.300 0Z" fill="#2fbf3f" />
    <text x="4.600" y="12" fontSize="6.500" fontWeight="700" fill="#8a6d1c" fontFamily="Roboto, sans-serif">$</text>
    <text x="14" y="12" fontSize="6.500" fontWeight="700" fill="#8a6d1c" fontFamily="Roboto, sans-serif">$</text>
  </svg>
);

const ROWS: [string, number, string, number][] = [
  ["Переводы", 147316, "#503233", 38.500],
  ["Рестораны", 48316, "#6f4a49", 40.500],
  ["Наличные", 18000, "#8c5759", 38.500],
  ["Одежда и обувь", 17353, "#a06466", 62.500],
  ["Фастфуд", 12338, "#b57273", 34],
  ["Развлечения", 9926, "#c58081", 48.500],
  ["Дом и ремонт", 5047, "#cb9789", 52.500],
  ["Различные товары", 4270, "#d1ab92", 71],
  ["Местный транспорт", 3170, "#d8ba9a", 76.500],
  ["Такси", 2757, "#dec9a2", 21.500],
  ["Аптеки", 2135, "#e4daaa", 27.500],
  ["Мобильная связь", 1448, "#edebba", 65.500],
  ["Транспорт", 1192, "#f0efcc", 40],
  ["НКО", 1018, "#f5f4dc", 16],
  ["Цифровые товары", 697, "#fbfaf0", 70],
];
const TICKS = [0, 20000, 40000, 60000, 80000, 100000, 120000, 140000];
const PER_RUBLE = 52.2 / 20000;

function ForecastChart() {
  return (
    <svg className="block" width="525" height="344" viewBox="247 117 525 344" fontFamily="'DejaVu Sans', sans-serif">
      <rect x="247" y="117" width="526" height="344" fill="#fff" />
      <text x="508.300" y="130.500" textLength="92" lengthAdjust="spacingAndGlyphs" fontSize="11.800" fontWeight="700" fill="#000">Прогноз трат</text>
      {TICKS.map((t) => (
        <g key={t}>
          <line x1={352.200 + t * PER_RUBLE} x2={352.200 + t * PER_RUBLE} y1="142.500" y2="411" stroke="#e6e6e6" strokeWidth="1.100" strokeDasharray="3 1" />
          <text x={352.200 + t * PER_RUBLE} y="421.500" textAnchor="middle" fontSize="7.200" fill="#8c8c8c">{t}</text>
        </g>
      ))}
      {ROWS.map(([name, value, color, width], i) => {
        const y = 161.300 + i * 16.430;
        return (
          <g key={name}>
            <line x1="352" x2="756.500" y1={y + 0.200} y2={y + 0.200} stroke="#d6d6d6" strokeWidth="1" />
            <rect x="352.200" y={y - 6.300} width={value * PER_RUBLE} height="12.800" fill={color} />
            <text x={346.200 - width} y={y + 2.700} textLength={width} fontSize="7.100" fill="#959595">{name}</text>
            <text x={352.300 + value * PER_RUBLE} y={y + 2.200} fontSize="7.200" fontWeight="700" fill="#000">{value}</text>
          </g>
        );
      })}
      <text transform="translate(260 303) rotate(-90)" textLength="51" fontSize="8" fontWeight="700" fill="#403535">Категория</text>
      <text x="512.200" y="439" textLength="84" fontSize="8.200" fontWeight="700" fill="#403838">Сумма (в рублях)</text>
      <text x="447.700" y="454.800" textLength="213" fontSize="9" fill="#8c8c8c">В остальных категориях траты минимальны</text>
    </svg>
  );
}

const ACTIONS = [
  { label: "Рассмотреть другой период", shape: "rounded-[7px]" },
  { label: "Назад", shape: "rounded-[7px]" },
  { label: "Выход", shape: "rounded-[7px] rounded-bl-[18px] rounded-br-[18px]" },
];

function Composer() {
  return (
    <div className="flex items-center gap-[10px]">
      <div className="relative flex h-[67px] w-[800px] items-center rounded-[19px] rounded-br-none bg-white pl-[15px] pr-[20px] shadow-[0_1px_4px_rgba(60,90,40,0.3)]">
        <button className="flex h-[37px] w-[47px] items-center justify-center rounded-[18.5px] bg-[#3390ec]">
          <svg width="22" height="16" viewBox="0 0 22 16" stroke="#fff" strokeWidth="2" strokeLinecap="round">
            <path d="M1.500 2.500H20.500M1.500 8.200H20.500M1.500 13.900H20.500" />
          </svg>
        </button>
        <svg className="-mt-px ml-[17px]" width="30" height="30" viewBox="0 0 30 30" fill="none" stroke="#707579" strokeWidth="2.500" strokeLinecap="round">
          <circle cx="15" cy="15" r="12.700" />
          <path d="M8.700 18.200Q15 24.500 21.300 18.200" />
          <circle cx="10.800" cy="11.500" r="2" fill="#707579" stroke="none" />
          <circle cx="19.200" cy="11.500" r="2" fill="#707579" stroke="none" />
        </svg>
        <span className="-mt-[2px] ml-[20px] flex-1 text-[20px] leading-[26px] text-[#a2acb4]">Message</span>
        <svg className="-mt-px" width="26" height="28" viewBox="0 0 26 28" fill="none" stroke="#707579" strokeWidth="2.300" strokeLinecap="round">
          <path d="M21.500 18.300L17.500 22.700C13.700 26.700 8 27 4.700 23.700C1.500 20.400 1.800 15.600 5.200 12.100L12.600 4.300C15.400 1.500 19.300 1.500 21.800 4C24.200 6.400 24.100 10.100 21.400 12.800L14.400 20.200C12.700 21.900 10.300 22 8.800 20.500C7.200 18.900 7.400 16.700 9.100 15L14.500 9.400" />
        </svg>
        <TailRight className="text-white" />
      </div>
      <button className="flex size-[67px] items-center justify-center rounded-full bg-[#3390ec] shadow-[0_1px_4px_rgba(60,90,40,0.3)]">
        <svg className="-mt-px" width="24" height="28" viewBox="0 0 24 28" fill="none">
          <rect x="6.500" y="1" width="11" height="17.200" rx="5.500" fill="#fff" />
          <path d="M2.200 12.300C2.200 17.500 6.500 21.200 12 21.200S21.800 17.500 21.800 12.300M12 21V26" stroke="#fff" strokeWidth="2.600" strokeLinecap="round" />
        </svg>
      </button>
    </div>
  );
}

const bubbleShadow = "shadow-[0_1px_2px_rgba(114,140,90,0.45)]";

export default function App() {
  return (
    <div className="relative h-[744px] w-[1295px] overflow-hidden font-[Roboto,'Noto_Sans',sans-serif]">
      <Wallpaper />
      <div className="relative flex flex-col pl-[247.3px] pt-px">
        <div className={`relative h-[64px] w-[600px] rounded-[18px] rounded-bl-none rounded-tl-[6px] bg-white pl-[10px] pt-[5px] text-[20px] leading-[26px] text-[#0a0a0a] ${bubbleShadow}`}>
          <p className="whitespace-nowrap">
            Введите количество месяцев, на которое вы хотите получить
            <br />
            предсказание
            <MoneyFace />
          </p>
          <span className="absolute bottom-[4px] right-[10px] text-[15px] leading-[18px] text-[#868a8e]">21:38</span>
          <TailLeft />
        </div>

        <div className={`relative ml-[703.5px] mt-[7px] flex h-[38px] w-[96px] items-center rounded-[19px] rounded-br-none bg-[#e3fee0] pl-[10px] text-[#0a0a0a] ${bubbleShadow}`}>
          <span className="-mt-px text-[20px] leading-[26px]">5</span>
          <span className="ml-[6.5px] mt-[12px] text-[15px] leading-[18px] text-[#5fb35e]">21:38</span>
          <svg className="ml-px mt-[12px]" width="22" height="14" viewBox="0 0 22 14" fill="none" stroke="#5fb35e" strokeWidth="1.900">
            <path d="M1 7.500L5.500 12L14.500 1.500M10 10L12 12L21 1.500" />
          </svg>
          <TailRight className="text-[#e3fee0]" />
        </div>

        <div className={`relative mt-[7px] h-[344px] w-[525px] overflow-hidden rounded-[18px] rounded-bl-[6px] bg-white ${bubbleShadow}`}>
          <ForecastChart />
          <span className="absolute bottom-[4px] right-[4px] flex h-[22px] w-[50px] items-center justify-center rounded-full bg-[#a3a3a3] text-[15px] font-medium text-white">21:38</span>
        </div>

        <div className={`relative mt-[3px] flex h-[37px] w-[363px] rounded-t-[18px] rounded-tl-[6px] rounded-br-[6px] bg-white pl-[10px] pt-[5px] text-[#0a0a0a] ${bubbleShadow}`}>
          <span className="whitespace-nowrap text-[20px] leading-[26px]">Что вы хотите сделать дальше?</span>
          <span className="absolute bottom-[4px] right-[9px] text-[15px] leading-[18px] text-[#868a8e]">21:38</span>
          <TailLeft />
        </div>

        <div className="mt-[4px] flex w-[363px] flex-col gap-[2.5px]">
          {ACTIONS.map((a) => (
            <button key={a.label} className={`flex h-[50px] items-center justify-center bg-[#5fa047]/50 pt-px text-[17.5px] font-semibold text-white ${a.shape}`}>
              {a.label}
            </button>
          ))}
        </div>

        <div className="mt-[6px]">
          <Composer />
        </div>
      </div>
    </div>
  );
}
